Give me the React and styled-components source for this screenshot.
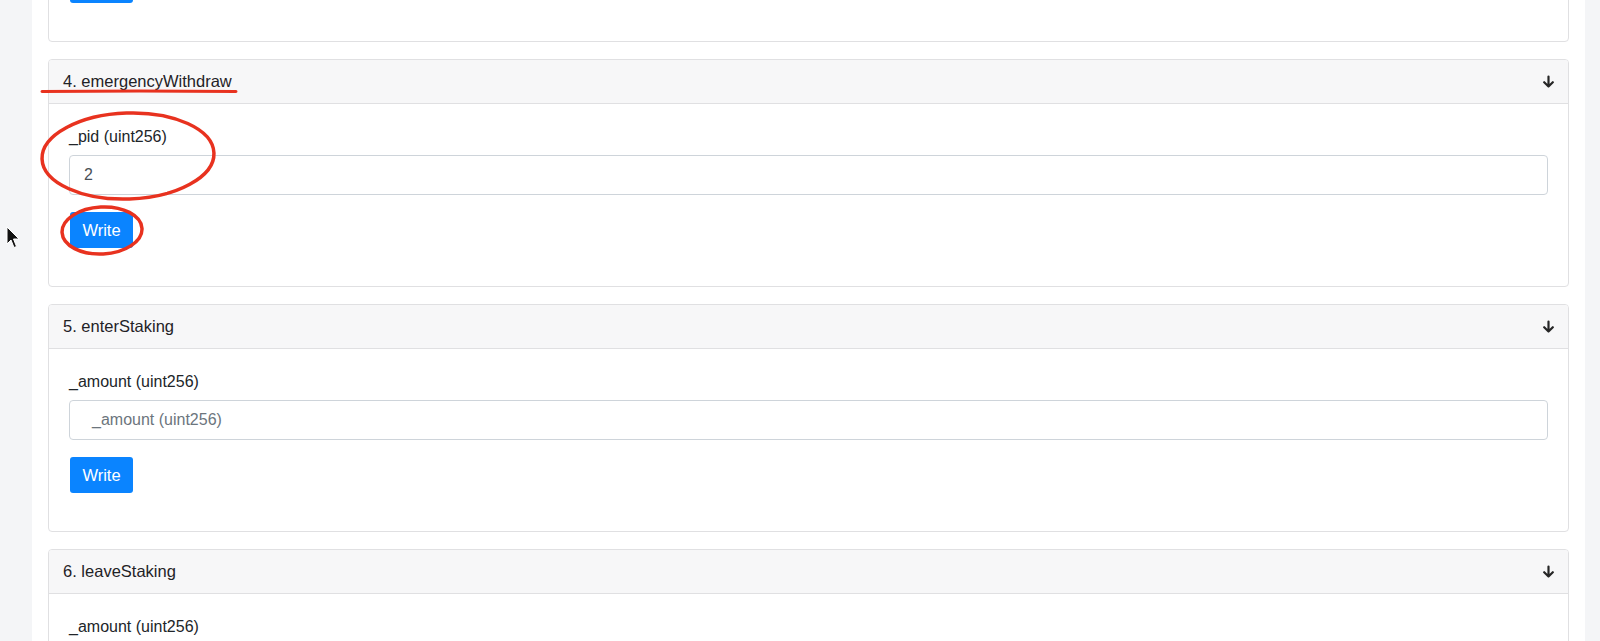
import React from 'react';
import styled, { createGlobalStyle } from 'styled-components';

const GlobalStyle = createGlobalStyle`
  html, body {
    margin: 0;
    padding: 0;
    background: #f4f5f7;
    font-family: "Liberation Sans", Arial, Helvetica, sans-serif;
    color: #212529;
    overflow: hidden;
  }
  * {
    box-sizing: border-box;
  }
`;

const Page = styled.div`
  position: relative;
  width: 1600px;
  height: 641px;
  overflow: hidden;
  padding: 0 15px 0 32px;
`;

const Panel = styled.div`
  display: flow-root;
  background: #ffffff;
  height: 100%;
  padding: 0 16px;
`;

// list is scrolled so that the previous function card peeks in at the top
const List = styled.div`
  margin-top: -186px;
  display: flex;
  flex-direction: column;
  gap: 17px;
`;

const Card = styled.div`
  border: 1px solid #e0e0e2;
  border-radius: 4px;
  background: #fff;
  overflow: hidden;
`;

const CardHeader = styled.div`
  height: 44px;
  display: flex;
  align-items: center;
  justify-content: space-between;
  padding: 0 13px 0 14px;
  background: #f7f7f8;
  border-bottom: 1px solid #e0e0e2;
  font-size: 16.5px;
  color: #1f2226;
`;

const CardBody = styled.div`
  padding: 21px 20px 38px 20px;
`;

const Label = styled.div`
  font-size: 16px;
  line-height: 24px;
  margin-bottom: 6px;
`;

const Input = styled.input`
  display: block;
  width: 100%;
  height: 40px;
  padding: 0 14px;
  border: 1px solid #ced4da;
  border-radius: 4px;
  font-family: inherit;
  font-size: 16px;
  color: #495057;
  background: #fff;
  outline: none;

  &::placeholder {
    color: #6c757d;
  }
  &:placeholder-shown {
    text-indent: 8px;
  }
`;

const WriteButton = styled.button`
  display: block;
  margin-top: 17px;
  margin-left: 1px;
  width: 63px;
  height: 36px;
  padding: 0;
  border: none;
  border-radius: 3px;
  background: #0a84ff;
  color: #fff;
  font-family: inherit;
  font-size: 16.5px;
`;

const Marks = styled.svg`
  position: absolute;
  left: 0;
  top: 0;
  pointer-events: none;
`;

const Arrow = () => (
  <svg width="13" height="13" viewBox="0 0 13 13" fill="none" stroke="#262626" strokeWidth="2.2" strokeLinecap="round" strokeLinejoin="round">
    <path d="M6.5 1.5v10M2.2 7.2l4.3 4.3 4.3-4.3" />
  </svg>
);

const functions = [
  { id: 3, name: 'updateMultiplier', arg: '_pid (uint256)', value: '1' },
  { id: 4, name: 'emergencyWithdraw', arg: '_pid (uint256)', value: '2' },
  { id: 5, name: 'enterStaking', arg: '_amount (uint256)', value: '' },
  { id: 6, name: 'leaveStaking', arg: '_amount (uint256)', value: '' },
];

const FunctionCard = ({ fn }) => (
  <Card>
    <CardHeader>
      <span>{fn.id}. {fn.name}</span>
      <Arrow />
    </CardHeader>
    <CardBody>
      <Label>{fn.arg}</Label>
      <Input defaultValue={fn.value} placeholder={fn.arg} />
      <WriteButton>Write</WriteButton>
    </CardBody>
  </Card>
);

export default function App() {
  return (
    <>
      <GlobalStyle />
      <Page>
        <Panel>
          <List>
            {functions.map((fn) => (
              <FunctionCard key={fn.id} fn={fn} />
            ))}
          </List>
        </Panel>
        <Marks width="1600" height="641" viewBox="0 0 1600 641">
          <path d="M42 91.5 Q140 90.5 236 91.5" stroke="#e8321f" strokeWidth="3" fill="none" strokeLinecap="round" />
          <ellipse cx="128" cy="156" rx="86" ry="43" transform="rotate(-2 128 156)" stroke="#e8321f" strokeWidth="3.5" fill="none" />
          <ellipse cx="102" cy="230.5" rx="40" ry="23.5" transform="rotate(-3 102 230)" stroke="#e8321f" strokeWidth="3.5" fill="none" />
          <path d="M7 227 L7 244 L11 240 L14 247.5 L16.5 246.5 L13.5 239 L19 239 Z" fill="#111" stroke="#fff" strokeWidth="1" strokeLinejoin="round" />
        </Marks>
      </Page>
    </>
  );
}
